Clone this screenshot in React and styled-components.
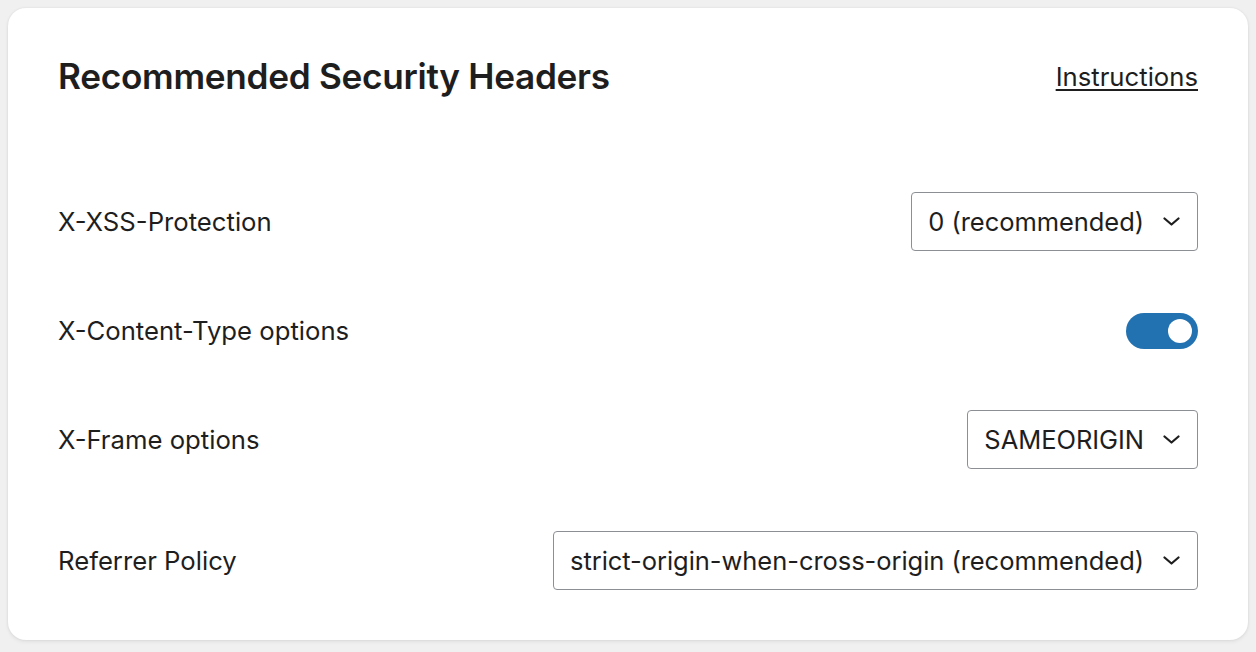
import React from "react";
import styled, { createGlobalStyle } from "styled-components";

const Global = createGlobalStyle`
  html, body { margin: 0; padding: 0; background: #f0f0f1; }
  body { font-family: Inter, "Noto Sans", "Liberation Sans", sans-serif; color: #1e1e1e; }
  * { box-sizing: border-box; }
`;

const Page = styled.div`
  padding: 8px;
  width: 1256px;
  min-height: 652px;
`;

const Card = styled.section`
  background: #fff;
  border-radius: 18px;
  box-shadow: 0 0 3px rgba(0, 0, 0, 0.08), 0 2px 4px rgba(0, 0, 0, 0.06);
  padding: 40px 50px 25px;
  height: 632px;
`;

const Header = styled.header`
  display: flex;
  align-items: center;
  justify-content: space-between;
  height: 56px;
  margin-bottom: 63px;
`;

const Title = styled.h1`
  margin: 0;
  font-size: 35.2px;
  font-weight: 600;
  letter-spacing: -0.3px;
  color: #1e1e1e;
`;

const Link = styled.a`
  font-size: 25.7px;
  color: #1e1e1e;
  text-decoration: underline;
  text-underline-offset: 3px;
  text-decoration-thickness: 1.5px;
`;

const Row = styled.div`
  display: flex;
  align-items: center;
  justify-content: space-between;
  padding: 25px 0;
  margin-top: ${(p) => (p.$extra ? "12px" : "0")};
  min-height: 109px;
`;

const Label = styled.span`
  font-size: 25.7px;
  color: #1e1e1e;
`;

const Select = styled.div`
  display: flex;
  align-items: center;
  height: 59px;
  padding: 0 17px 0 16px;
  border: 1.5px solid #8c8f94;
  border-radius: 4px;
  background: #fff;
  font-size: 25.5px;
  letter-spacing: -0.05px;
  color: #1e1e1e;
  gap: 19px;
  cursor: pointer;
`;

const Toggle = styled.div`
  position: relative;
  width: 72px;
  height: 36px;
  border-radius: 18px;
  background: ${(p) => (p.$on ? "#2271b1" : "#8c8f94")};
`;

const Knob = styled.span`
  position: absolute;
  top: 6px;
  right: ${(p) => (p.$on ? "6px" : "auto")};
  left: ${(p) => (p.$on ? "auto" : "6px")};
  width: 24px;
  height: 24px;
  border-radius: 50%;
  background: #fff;
`;

const Chevron = () => (
  <svg width="17" height="9" viewBox="0 0 17 9" fill="none">
    <path d="M1.5 1.5 L8.5 7.5 L15.5 1.5" stroke="#1e1e1e" strokeWidth="2.2" strokeLinecap="round" strokeLinejoin="round" />
  </svg>
);

const Dropdown = ({ value }) => (
  <Select>
    <span>{value}</span>
    <Chevron />
  </Select>
);

export default function App() {
  return (
    <>
      <Global />
      <Page>
        <Card>
          <Header>
            <Title>Recommended Security Headers</Title>
            <Link href="#">Instructions</Link>
          </Header>
          <Row>
            <Label>X-XSS-Protection</Label>
            <Dropdown value="0 (recommended)" />
          </Row>
          <Row>
            <Label>X-Content-Type options</Label>
            <Toggle $on>
              <Knob $on />
            </Toggle>
          </Row>
          <Row>
            <Label>X-Frame options</Label>
            <Dropdown value="SAMEORIGIN" />
          </Row>
          <Row $extra>
            <Label>Referrer Policy</Label>
            <Dropdown value="strict-origin-when-cross-origin (recommended)" />
          </Row>
        </Card>
      </Page>
    </>
  );
}
